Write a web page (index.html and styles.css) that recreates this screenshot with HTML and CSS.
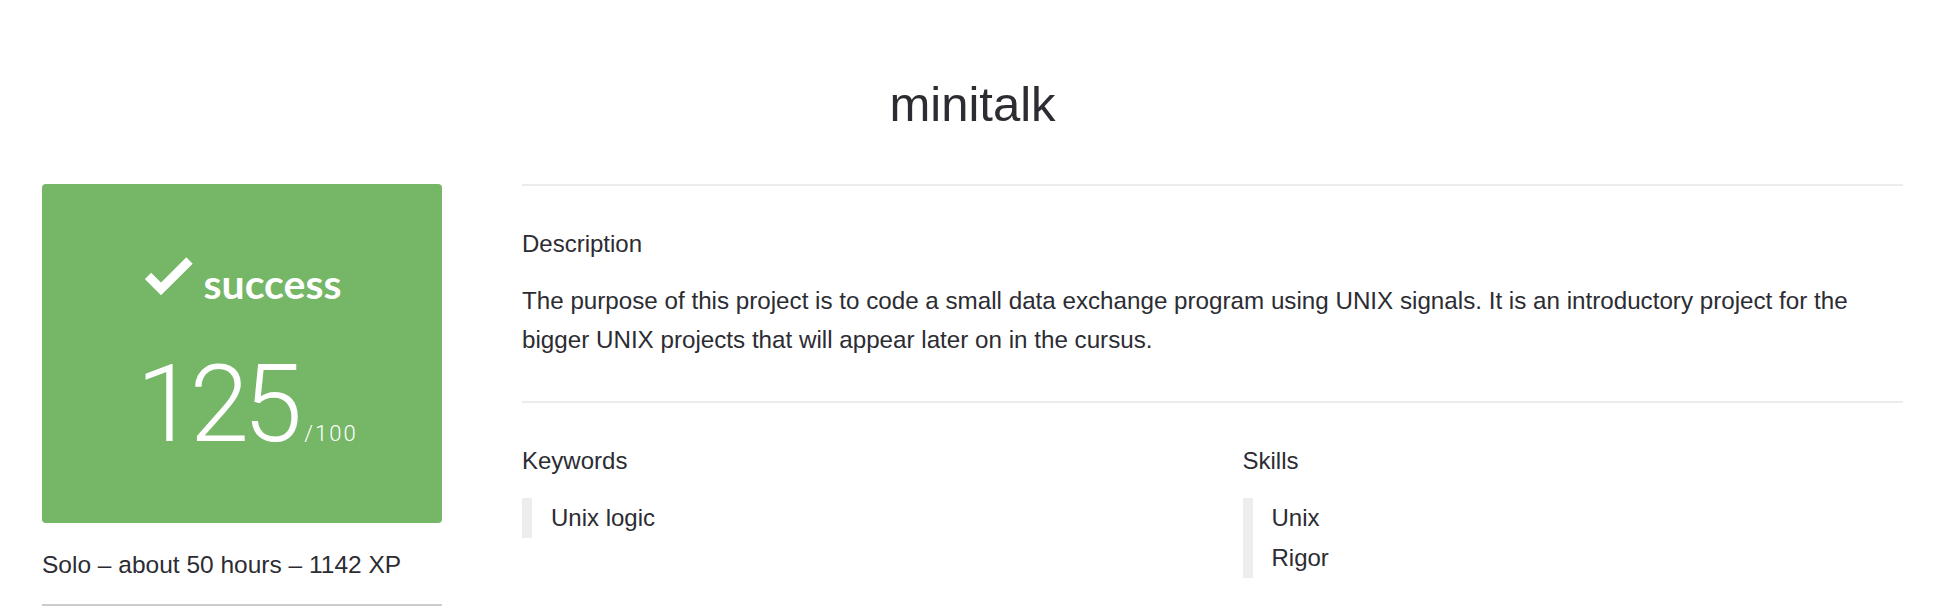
FILE: index.html
```html
<!DOCTYPE html>
<html lang="en">
<head>
<meta charset="utf-8">
<title>minitalk</title>
<link rel="stylesheet" href="styles.css">
</head>
<body>
<div class="page">
  <h1 class="title">minitalk</h1>
  <div class="main">
    <aside class="side">
      <div class="mark">
        <div class="status">
          <svg class="check" width="48" height="40" viewBox="0 0 48 40" aria-hidden="true">
            <polyline points="3,20 16,33 44.5,4.5" fill="none" stroke="#fff" stroke-width="9" stroke-linejoin="miter" stroke-linecap="butt"/>
          </svg>
          <span class="status-text">success</span>
        </div>
        <div class="score">
          <span class="score-num">125</span><span class="score-max">/100</span>
        </div>
      </div>
      <p class="meta">Solo – about 50 hours – 1142 XP</p>
    </aside>
    <section class="content">
      <div class="block">
        <h2 class="label">Description</h2>
        <p class="desc">The purpose of this project is to code a small data exchange program using UNIX signals. It is an introductory project for the bigger UNIX projects that will appear later on in the cursus.</p>
      </div>
      <div class="block cols">
        <div class="col">
          <h2 class="label">Keywords</h2>
          <ul class="tags">
            <li>Unix logic</li>
          </ul>
        </div>
        <div class="col">
          <h2 class="label">Skills</h2>
          <ul class="tags">
            <li>Unix</li>
            <li>Rigor</li>
          </ul>
        </div>
      </div>
    </section>
  </div>
</div>
</body>
</html>
```

FILE: styles.css
```css
html, body {
  margin: 0;
  padding: 0;
  background: #ffffff;
}

body {
  font-family: "Liberation Sans", Arial, sans-serif;
  color: #2c2c33;
  font-size: 24px;
}

.page {
  padding: 74px 45px 0 42px;
}

.title {
  margin: 0;
  text-align: center;
  font-size: 49px;
  line-height: 60px;
  font-weight: 400;
  color: #2c2c33;
}

.main {
  display: grid;
  grid-template-columns: 400px 1fr;
  column-gap: 80px;
  margin-top: 50px;
}

/* left column */
.mark {
  box-sizing: border-box;
  height: 339px;
  background: #75b667;
  border-radius: 4px;
  padding-top: 72px;
  color: #fff;
}

.status {
  display: flex;
  justify-content: center;
  align-items: flex-end;
  gap: 11px;
}

.check {
  display: block;
  margin-bottom: 12px;
  margin-left: 2px;
}

.status-text {
  font-family: Lato, "Liberation Sans", sans-serif;
  font-weight: 700;
  font-size: 41px;
  line-height: 48px;
}

.score {
  display: flex;
  justify-content: center;
  align-items: baseline;
  margin-top: 41px;
  padding-left: 10px;
}

.score-num {
  font-family: Roboto, "Liberation Sans", sans-serif;
  font-weight: 300;
  font-size: 107px;
  line-height: 112px;
  letter-spacing: -6px;
}

.score-max {
  font-family: Roboto, "Liberation Sans", sans-serif;
  font-weight: 300;
  font-size: 22px;
  letter-spacing: 2px;
  margin-left: 8px;
}

.meta {
  margin: 27px 0 0;
  padding-bottom: 24px;
  line-height: 30px;
  font-size: 24.5px;
  border-bottom: 2px solid #cccccc;
}

/* right column */
.block {
  border-top: 2px solid #ececec;
  padding: 43px 0 42px;
}

.label {
  margin: 0;
  font-size: 24px;
  line-height: 30px;
  font-weight: 400;
}

.desc {
  margin: 22px 0 0;
  line-height: 39px;
  font-size: 24.2px;
  max-width: 1355px;
}

.cols {
  display: grid;
  grid-template-columns: 1fr 1fr;
  column-gap: 60px;
}

.tags {
  list-style: none;
  margin: 22px 0 0;
  padding: 0 0 0 19px;
  border-left: 10px solid #ededed;
}

.tags li {
  line-height: 40px;
}
```
